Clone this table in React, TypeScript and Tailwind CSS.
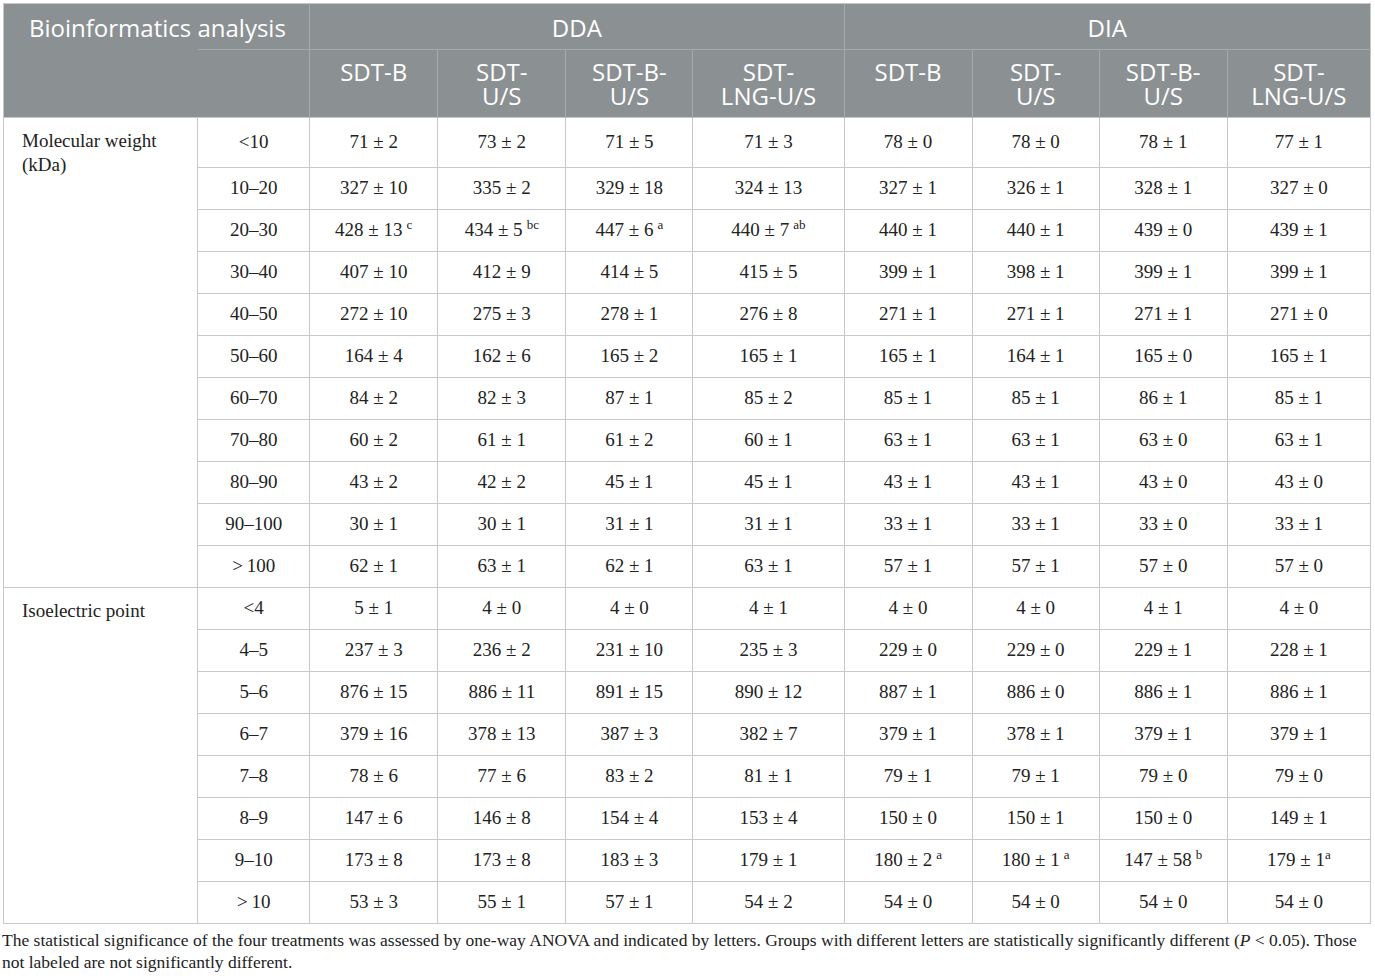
import React from "react";

type Row = { range: string; vals: string[]; sup?: (string | null)[]; first?: boolean };

const mw: Row[] = [
  { range: "<10", vals: ["71 ± 2", "73 ± 2", "71 ± 5", "71 ± 3", "78 ± 0", "78 ± 0", "78 ± 1", "77 ± 1"], first: true },
  { range: "10–20", vals: ["327 ± 10", "335 ± 2", "329 ± 18", "324 ± 13", "327 ± 1", "326 ± 1", "328 ± 1", "327 ± 0"] },
  {
    range: "20–30",
    vals: ["428 ± 13", "434 ± 5", "447 ± 6", "440 ± 7", "440 ± 1", "440 ± 1", "439 ± 0", "439 ± 1"],
    sup: ["c", "bc", "a", "ab", null, null, null, null],
  },
  { range: "30–40", vals: ["407 ± 10", "412 ± 9", "414 ± 5", "415 ± 5", "399 ± 1", "398 ± 1", "399 ± 1", "399 ± 1"] },
  { range: "40–50", vals: ["272 ± 10", "275 ± 3", "278 ± 1", "276 ± 8", "271 ± 1", "271 ± 1", "271 ± 1", "271 ± 0"] },
  { range: "50–60", vals: ["164 ± 4", "162 ± 6", "165 ± 2", "165 ± 1", "165 ± 1", "164 ± 1", "165 ± 0", "165 ± 1"] },
  { range: "60–70", vals: ["84 ± 2", "82 ± 3", "87 ± 1", "85 ± 2", "85 ± 1", "85 ± 1", "86 ± 1", "85 ± 1"] },
  { range: "70–80", vals: ["60 ± 2", "61 ± 1", "61 ± 2", "60 ± 1", "63 ± 1", "63 ± 1", "63 ± 0", "63 ± 1"] },
  { range: "80–90", vals: ["43 ± 2", "42 ± 2", "45 ± 1", "45 ± 1", "43 ± 1", "43 ± 1", "43 ± 0", "43 ± 0"] },
  { range: "90–100", vals: ["30 ± 1", "30 ± 1", "31 ± 1", "31 ± 1", "33 ± 1", "33 ± 1", "33 ± 0", "33 ± 1"] },
  { range: ">\u2009100", vals: ["62 ± 1", "63 ± 1", "62 ± 1", "63 ± 1", "57 ± 1", "57 ± 1", "57 ± 0", "57 ± 0"] },
];

const pi: Row[] = [
  { range: "<4", vals: ["5 ± 1", "4 ± 0", "4 ± 0", "4 ± 1", "4 ± 0", "4 ± 0", "4 ± 1", "4 ± 0"] },
  { range: "4–5", vals: ["237 ± 3", "236 ± 2", "231 ± 10", "235 ± 3", "229 ± 0", "229 ± 0", "229 ± 1", "228 ± 1"] },
  { range: "5–6", vals: ["876 ± 15", "886 ± 11", "891 ± 15", "890 ± 12", "887 ± 1", "886 ± 0", "886 ± 1", "886 ± 1"] },
  { range: "6–7", vals: ["379 ± 16", "378 ± 13", "387 ± 3", "382 ± 7", "379 ± 1", "378 ± 1", "379 ± 1", "379 ± 1"] },
  { range: "7–8", vals: ["78 ± 6", "77 ± 6", "83 ± 2", "81 ± 1", "79 ± 1", "79 ± 1", "79 ± 0", "79 ± 0"] },
  { range: "8–9", vals: ["147 ± 6", "146 ± 8", "154 ± 4", "153 ± 4", "150 ± 0", "150 ± 1", "150 ± 0", "149 ± 1"] },
  {
    range: "9–10",
    vals: ["173 ± 8", "173 ± 8", "183 ± 3", "179 ± 1", "180 ± 2", "180 ± 1", "147 ± 58", "179 ± 1"],
    sup: [null, null, null, null, "a", "a", "b", "a"],
  },
  { range: ">\u200910", vals: ["53 ± 3", "55 ± 1", "57 ± 1", "54 ± 2", "54 ± 0", "54 ± 0", "54 ± 0", "54 ± 0"] },
];

// the last DIA cell of row 9–10 has its letter set tight against the number
const tightSup = (r: Row, j: number) => r.range === "9–10" && j === 7;

const heads = ["SDT-B", "SDT-\nU/S", "SDT-B-\nU/S", "SDT-\nLNG-U/S", "SDT-B", "SDT-\nU/S", "SDT-B-\nU/S", "SDT-\nLNG-U/S"];

const hb = "border-[#a6aaad]";
const bb = "border border-[#c8c8c8]";

function Section({ label, rows }: { label: string; rows: Row[] }) {
  return (
    <>
      {rows.map((r, i) => (
        <tr key={r.range} className={r.first ? "h-[50px]" : "h-[42px]"}>
          {i === 0 && (
            <td rowSpan={rows.length} className={`${bb} align-top pl-[18px] pr-2 pt-[11px] leading-[24px] text-left`}>
              {label}
            </td>
          )}
          <td className={`${bb} text-center`}>{r.range}</td>
          {r.vals.map((v, j) => (
            <td key={j} className={`${bb} text-center`}>
              {v}
              {r.sup && r.sup[j] && (
                <sup className={`text-[13px] -top-[7px] ${tightSup(r, j) ? "ml-0" : "ml-[4px]"}`}>{r.sup[j]}</sup>
              )}
            </td>
          ))}
        </tr>
      ))}
    </>
  );
}

export default function App() {
  const widths = [194, 112, 128, 128, 127, 151, 128, 127, 128, 143];
  return (
    <div className="bg-white min-h-screen pt-[3px] pl-[3px] pr-[4px]" style={{ fontFamily: '"Liberation Serif", "Times New Roman", serif' }}>
      <table className="table-fixed border-collapse w-[1368px] border border-[#c8c8c8] text-[19px] text-[#222]">
        <colgroup>
          {widths.map((w, i) => (
            <col key={i} style={{ width: w }} />
          ))}
        </colgroup>
        <thead className="bg-[#8b9093] text-white font-['Open_Sans',sans-serif] text-[24px]">
          <tr className="h-[46px]">
            <th colSpan={2} className={`border-r ${hb} text-left font-normal pl-[25px] pt-[3px]`}>
              Bioinformatics analysis
            </th>
            <th colSpan={4} className={`border-r ${hb} font-normal pt-[3px]`}>DDA</th>
            <th colSpan={4} className="font-normal pt-[3px]">DIA</th>
          </tr>
          <tr className="h-[68px]">
            <th className="font-normal"></th>
            <th className={`border-t border-r ${hb} font-normal`}></th>
            {heads.map((h, i) => (
              <th
                key={i}
                className={`border-t ${i < 7 ? "border-r" : ""} ${hb} font-normal leading-[24px] whitespace-pre-line align-top pt-[10px]`}
              >
                {h}
              </th>
            ))}
          </tr>
        </thead>
        <tbody>
          <Section label="Molecular weight (kDa)" rows={mw} />
          <Section label="Isoelectric point" rows={pi} />
        </tbody>
      </table>
      <p className="mt-[5px] text-[17.5px] leading-[22px] text-[#222] w-[1372px] -ml-[1px]">
        The statistical significance of the four treatments was assessed by one-way ANOVA and indicated by letters. Groups with different letters are statistically significantly different (<i>P</i> &lt; 0.05). Those not labeled are not significantly different.
      </p>
    </div>
  );
}
